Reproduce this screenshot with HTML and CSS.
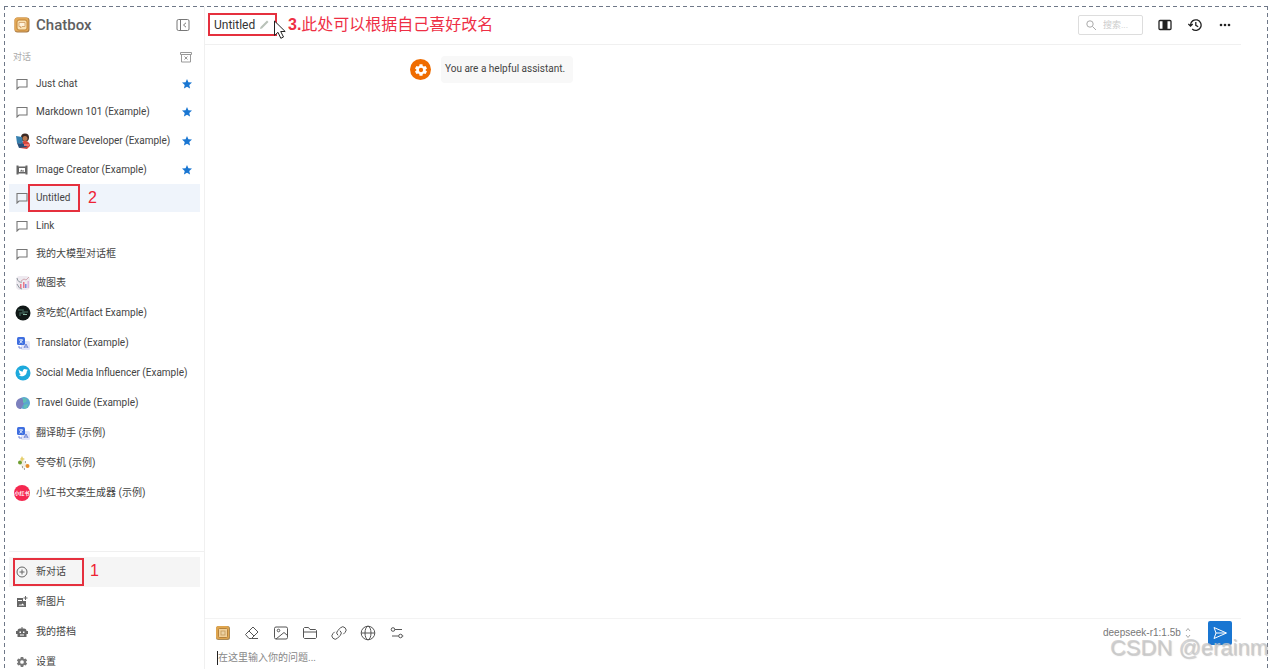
FILE: index.html
```html
<!DOCTYPE html>
<html lang="zh-CN">
<head>
<meta charset="utf-8">
<title>Chatbox</title>
<meta name="viewport" content="width=device-width, initial-scale=1">
<link rel="stylesheet" href="styles.css">
</head>
<body>
<svg class="sprite" aria-hidden="true">
  <symbol id="bubble" viewBox="0 0 12 12"><path fill="none" stroke="currentColor" stroke-width="1.100" d="M1 11V1.500h10v7.500H3z"/></symbol>
  <symbol id="star" viewBox="0 0 24 24"><path fill="currentColor" d="M12 17.270 18.180 21l-1.640-7.030L22 9.240l-7.190-.610L12 2 9.190 8.630 2 9.240l5.460 4.730L5.820 21z"/></symbol>
  <symbol id="gear" viewBox="0 0 24 24"><path fill="currentColor" fill-rule="evenodd" d="M9.500 2h5l.5 3 2 1.100 2.800-1.100 2.500 4.300-2.300 1.900v1.600l2.300 1.900-2.500 4.300-2.800-1.100-2 1.100-.5 3h-5L9 19l-2-1.100L4.200 19l-2.500-4.300L4 12.800v-1.600L1.700 9.300 4.200 5 7 6.100 9 5zM12 8.300a3.700 3.700 0 1 0 0 7.400 3.700 3.700 0 0 0 0-7.400z"/></symbol>
  <symbol id="logo" viewBox="0 0 16 16"><rect x=".5" y=".5" width="15" height="15" rx="3" fill="#a97c48"/><rect x=".5" y=".5" width="14" height="14" rx="3" fill="#e3a856"/><rect x="3" y="3" width="10" height="10" rx="2" fill="#fbe3b4" stroke="#c08438"/><path d="M5 5.500h6v4H8L6.500 11V9.500H5z" fill="#fff3dc" stroke="#cf9a62" stroke-width=".8"/></symbol>
  <symbol id="block" viewBox="0 0 16 16"><rect x="1" y="1" width="14" height="14" rx="2.500" fill="#a98a58"/><rect x="1" y="1" width="13" height="13" rx="2.500" fill="#dfa54e"/><rect x="3.500" y="3.500" width="9" height="9" rx="1" fill="#f0d09a" stroke="#b5823c"/><rect x="6" y="6" width="4" height="4" fill="#ecd2a4" stroke="#c39a5c" stroke-width=".8"/></symbol>
  <symbol id="translate" viewBox="0 0 16 16"><rect x="6" y="6" width="9" height="9" rx="1.500" fill="#e3e5f8"/><rect x="2" y="2" width="8" height="8" rx="1.500" fill="#3f6fe0"/><path d="M4 5h4M6 4v1M4.500 8.500 7.500 5M5 6l2.500 2" stroke="#fff" stroke-width=".8" fill="none"/><path d="M4 11v2h3M9 13l2-4 2 4M9.600 12h2.800" stroke="#6e83d6" fill="none"/></symbol>
</svg>

<div class="app">
  <aside class="sidebar">
    <header class="brand">
      <svg class="logo"><use href="#logo"/></svg>
      <h1>Chatbox</h1>
      <button class="plain" aria-label="收起侧栏"><svg class="i14" viewBox="0 0 14 14" fill="none" stroke="#777"><rect x="1" y="1.500" width="12" height="11" rx="1.500"/><path d="M4.500 1.500v11M10 4.800 7.500 7 10 9.200"/></svg></button>
    </header>
    <div class="section">
      <span>对话</span>
      <button class="plain" aria-label="归档"><svg class="i12" viewBox="0 0 12 12" fill="none" stroke="#999"><path d="M.5 1.500h11v2H.5zM1.500 3.500v7.500h9V3.500M4.500 5.500l3 3M7.500 5.500l-3 3"/></svg></button>
    </div>
    <nav class="chats">
      <a class="row" href="#"><span class="ico"><svg class="i12"><use href="#bubble"/></svg></span><span class="label">Just chat</span><svg class="star"><use href="#star"/></svg></a>
      <a class="row" href="#"><span class="ico"><svg class="i12"><use href="#bubble"/></svg></span><span class="label">Markdown 101 (Example)</span><svg class="star"><use href="#star"/></svg></a>
      <a class="row tall" href="#"><span class="ico"><svg class="i16" viewBox="0 0 16 16"><circle cx="10" cy="4.500" r="4" fill="#3c2a25"/><circle cx="10" cy="5.500" r="2.500" fill="#b87850"/><path d="M5 15c0-5 2-7 5-7s5 2 5 5l-3 3z" fill="#d8483c"/><path d="m1 3 6 1 1 7-6-1z" fill="#367fae"/><path d="m2 10 8 1 2 3-8 1z" fill="#284f7a"/><path d="M9 11h5v2H9z" fill="#ef7771"/></svg></span><span class="label">Software Developer (Example)</span><svg class="star"><use href="#star"/></svg></a>
      <a class="row" href="#"><span class="ico"><svg class="i12" viewBox="0 0 12 12"><path fill="#666" fill-rule="evenodd" d="M.5 1.500h2v1h7v-1h2v9h-2v-1h-7v1h-2zM3 4v4h6V4zM4 7.500l1.300-2 1 1.200.9-.8L8.300 7.500z"/></svg></span><span class="label">Image Creator (Example)</span><svg class="star"><use href="#star"/></svg></a>
      <a class="row active" href="#" aria-current="page"><span class="ico"><svg class="i12"><use href="#bubble"/></svg></span><span class="label">Untitled</span><span class="mark mark-chat"></span><span class="step step-chat">2</span></a>
      <a class="row" href="#"><span class="ico"><svg class="i12"><use href="#bubble"/></svg></span><span class="label">Link</span></a>
      <a class="row" href="#"><span class="ico"><svg class="i12"><use href="#bubble"/></svg></span><span class="label">我的大模型对话框</span></a>
      <a class="row tall" href="#"><span class="ico"><svg class="i16" viewBox="0 0 16 16"><rect x="1" y="1" width="14" height="14" rx="4" fill="#eeeaf0"/><path d="M2 3q1 5 5 4M2 9q2 5 5 5" stroke="#8e989e" fill="none"/><path d="M5 13V9h1.500v4zM8 13V7h1.500v6z" fill="#e8798b"/><path d="M10 13V9h1.500v4z" fill="#778bdc"/><path d="m6 6 3-2 2 1 3-3" stroke="#d3a9b2" fill="none"/><path d="M12.500 13V6H14v7z" fill="#e0b3da"/></svg></span><span class="label">做图表</span></a>
      <a class="row tall" href="#"><span class="ico"><svg class="i16" viewBox="0 0 16 16"><circle cx="8" cy="8" r="7.500" fill="#101817"/><path d="M3 5h5v3H5v3M9 10V7h4" stroke="#37564d" stroke-width="1.500" fill="none"/><path d="M8 9.500h4" stroke="#84b5a1"/></svg></span><span class="label">贪吃蛇(Artifact Example)</span></a>
      <a class="row tall" href="#"><span class="ico"><svg class="i16"><use href="#translate"/></svg></span><span class="label">Translator (Example)</span></a>
      <a class="row tall" href="#"><span class="ico"><svg class="i16" viewBox="0 0 16 16"><circle cx="8" cy="8" r="7.500" fill="#1da9dc"/><path fill="#fff" d="M3.800 4.500c1.200 1.400 2.500 2 4.100 2-.4-2.300 2-3.200 3.300-1.900l1.400-.4-.6 1.100.7-.1-.9 1c.1 4-4.200 6.300-8.300 4.300 1.100.1 2-.2 2.700-.8-1-.1-1.500-.6-1.700-1.300h.8c-1-.4-1.400-1.100-1.400-1.900l.7.2c-.9-.7-1.100-1.400-.8-2.200z"/></svg></span><span class="label">Social Media Influencer (Example)</span></a>
      <a class="row tall" href="#"><span class="ico"><svg class="i16" viewBox="0 0 16 16"><circle cx="9" cy="8" r="6" fill="#5aa7cf"/><path d="M1 9c0-4 3-6 6-6l2 5-3 6c-3 0-5-2-5-5z" fill="#7c80bd"/><path d="m8 3 4 1-1 3-3 1zM9 10l4-1-1 4-3 1z" fill="#61bfb4"/></svg></span><span class="label">Travel Guide (Example)</span></a>
      <a class="row tall" href="#"><span class="ico"><svg class="i16"><use href="#translate"/></svg></span><span class="label">翻译助手 (示例)</span></a>
      <a class="row tall" href="#"><span class="ico"><svg class="i16" viewBox="0 0 16 16"><path d="m4 7 3-4 5 6-4 6z" fill="#f0eee5"/><circle cx="5" cy="7.500" r="2" fill="#6f9e31"/><circle cx="12.500" cy="11" r="2" fill="#e58b2a"/><path d="m7 1 1 2 2 1-2 1-1 2-1-2-1-1 1-1z" fill="#e6cf6c"/><path d="M7 12h1M9 14h1M10 7h1" stroke="#555"/></svg></span><span class="label">夸夸机 (示例)</span></a>
      <a class="row tall" href="#"><span class="ico"><span class="redbook">小红书</span></span><span class="label">小红书文案生成器 (示例)</span></a>
    </nav>
    <nav class="actions">
      <button class="row tall hover"><span class="ico"><svg class="i12" viewBox="0 0 12 12" fill="none" stroke="#666"><circle cx="6" cy="6" r="5"/><path d="M6 3.500v5M3.500 6h5"/></svg></span><span class="label">新对话</span><span class="mark mark-new"></span><span class="step step-new">1</span></button>
      <button class="row tall"><span class="ico"><svg class="i12" viewBox="0 0 12 12"><path fill="#666" fill-rule="evenodd" d="M1 2h6v3h3v6H1zM2.500 9.500h6L6.500 7.500 5 9 4 8.200zM2 4v1h4V4z"/><path d="M9.500 0v4M7.500 2h4" stroke="#666"/></svg></span><span class="label">新图片</span></button>
      <button class="row tall"><span class="ico"><svg class="i12" viewBox="0 0 12 12"><path fill="#666" fill-rule="evenodd" d="M5.500 2.500V1h1v1.500H8A2.500 2.500 0 0 1 10.500 5H12v3h-1.500v3h-9V8H0V5h1.500A2.500 2.500 0 0 1 4 2.500zM3.500 5.500V7H5V5.500zm3.500 0V7h1.500V5.500zM4 8.500v1h4v-1z"/></svg></span><span class="label">我的搭档</span></button>
      <button class="row tall"><span class="ico"><svg class="i12"><use href="#gear"/></svg></span><span class="label">设置</span></button>
    </nav>
  </aside>

  <main class="main">
    <header class="topbar">
      <div class="title">
        <h2>Untitled</h2>
        <button class="plain" aria-label="重命名"><svg class="i12" viewBox="0 0 12 12"><path d="m2 10 .5-2L9 1.500 10.500 3 4 9.500z" fill="#b9c2b9"/></svg></button>
        <svg class="cursor" viewBox="0 0 14 20"><path d="M1.500 1v14.500L5 12.300l2.800 6 2.700-1.300-2.800-5.500h4.500z" fill="#fff" stroke="#222"/></svg>
      </div>
      <p class="note"><b>3.</b>此处可以根据自己喜好改名</p>
      <label class="search"><svg class="i12" viewBox="0 0 12 12" fill="none" stroke="#aaa"><circle cx="5" cy="5" r="3.200"/><path d="M7.500 7.500 11 11"/></svg><input type="text" placeholder="搜索..." aria-label="搜索"></label>
      <div class="tools">
        <button class="plain" aria-label="切换宽度"><svg class="i14" viewBox="0 0 14 14"><rect x="1" y="2.500" width="12" height="9" rx="1" fill="#fff" stroke="#222" stroke-width="1.300"/><path d="M4.500 2h5v10h-5z" fill="#222"/></svg></button>
        <button class="plain" aria-label="历史"><svg class="i14" viewBox="0 0 14 14" fill="none" stroke="#222" stroke-width="1.300"><path d="M2.500 7a5.300 5.300 0 1 1 1.700 4M.3 6l2.200 2 2.200-2M7.800 4v3.300l2.400 1.400"/></svg></button>
        <button class="plain" aria-label="更多"><svg class="i14" viewBox="0 0 14 14" fill="#222"><circle cx="3" cy="7" r="1.300"/><circle cx="7" cy="7" r="1.300"/><circle cx="11" cy="7" r="1.300"/></svg></button>
      </div>
    </header>
    <section class="thread">
      <div class="message">
        <span class="avatar"><svg class="i14"><use href="#gear"/></svg></span>
        <p>You are a helpful assistant.</p>
      </div>
    </section>
    <form class="composer">
      <div class="bar">
        <button type="button" class="plain" aria-label="Chatbox"><svg class="i16"><use href="#block"/></svg></button>
        <button type="button" class="plain" aria-label="清除"><svg class="i16 line" viewBox="0 0 16 16"><path d="M1.500 9.500 9 2l5 5-6.500 6.500H5zM5 6l5 5M7.500 13.500h6.500"/></svg></button>
        <button type="button" class="plain" aria-label="图片"><svg class="i16 line" viewBox="0 0 16 16"><rect x="1.500" y="2" width="13" height="12" rx="1.500"/><circle cx="5.500" cy="5.500" r="1.300"/><path d="m3 14 8-6.500 3.500 3"/></svg></button>
        <button type="button" class="plain" aria-label="文件"><svg class="i16 line" viewBox="0 0 16 16"><path d="M1.500 12.500v-9l1-1h4l1.500 2h5.500l1 1v7l-1 1h-11zM1.500 7h13"/></svg></button>
        <button type="button" class="plain" aria-label="链接"><svg class="i16 line" viewBox="0 0 16 16"><path d="M7 10.300a3.200 3.200 0 0 1-.3-4.700l2.800-2.800a3.200 3.200 0 0 1 4.600 4.600l-1.800 1.800M9 5.700a3.200 3.200 0 0 1 .3 4.700l-2.800 2.800a3.200 3.200 0 0 1-4.600-4.600l1.800-1.800"/></svg></button>
        <button type="button" class="plain" aria-label="联网"><svg class="i16 line" viewBox="0 0 16 16"><circle cx="8" cy="8" r="6.800"/><ellipse cx="8" cy="8" rx="3" ry="6.800"/><path d="M1.200 8h13.600"/></svg></button>
        <button type="button" class="plain" aria-label="设置"><svg class="i16 line" viewBox="0 0 16 16"><circle cx="4" cy="4.500" r="1.800"/><path d="M5.800 4.500H13"/><circle cx="11.500" cy="11" r="1.800"/><path d="M3 11h6.700M13.300 11h1"/></svg></button>
        <span class="model">
          <select aria-label="模型"><option>deepseek-r1:1.5b</option></select>
          <svg class="updown" viewBox="0 0 6 12" fill="none" stroke="#aaa"><path d="m1 4 2-2.500L5 4M1 8l2 2.500L5 8"/></svg>
        </span>
        <button type="submit" class="send" aria-label="发送"><svg class="i16" viewBox="0 0 16 16" fill="none" stroke="#fff"><path d="M2 2.500 14.500 8 2 13.500 4 8zM4 8h10"/></svg></button>
      </div>
      <div class="entry"><span class="caret"></span><textarea rows="1" placeholder="在这里输入你的问题..." aria-label="消息"></textarea></div>
    </form>
  </main>
  <div class="watermark">CSDN @erainm</div>
</div>
</body>
</html>
```
FILE: styles.css
```css
* { box-sizing: border-box; }
html, body { height: 100%; overflow: hidden; }
body { margin: 0; background: #fff; color: #444; font: 10px/16px Roboto, "Noto Sans CJK SC", sans-serif; }
h1, h2, p { margin: 0; }
button, input, select, textarea { font: inherit; color: inherit; border: 0; background: none; padding: 0; margin: 0; outline: 0; }
a { color: inherit; text-decoration: none; }
svg { display: block; flex: none; }
.sprite { position: absolute; width: 0; height: 0; }
.plain { display: flex; }
.i12 { width: 12px; height: 12px; }
.i14 { width: 14px; height: 14px; }
.i16 { width: 16px; height: 16px; }
.line { fill: none; stroke: #555; }

/* Dashed frame on three sides; the content runs past the bottom edge of the window. */
.app {
  position: relative;
  display: flex;
  height: calc(100% + 2px);
  margin: 6px 5px 0 4px;
  padding: 1px 1px 0;
  background:
    repeating-linear-gradient(90deg, #6f7888 0 4px, transparent 4px 7px) top / 100% 1px no-repeat,
    repeating-linear-gradient(#6f7888 0 4px, transparent 4px 7px) left / 1px 100% no-repeat,
    repeating-linear-gradient(#6f7888 0 4px, transparent 4px 7px) right / 1px 100% no-repeat;
}

.sidebar { flex: none; display: flex; flex-direction: column; width: 200px; padding-left: 4px; border-right: 1px solid #f0f0f0; }
.brand { display: flex; align-items: center; gap: 6px; height: 36px; padding: 0 14px 0 5px; }
.brand h1 { flex: 1; font-size: 15px; font-weight: 500; color: #606060; }
.logo { width: 16px; height: 16px; }
.section { display: flex; align-items: center; justify-content: space-between; height: 27px; padding: 0 12px 0 4px; font-size: 9px; color: #aaa; }
.chats { flex: 1; min-height: 0; padding-right: 4px; }
.row { position: relative; display: flex; align-items: center; width: 100%; height: 28px; padding: 0 7px 0 5px; text-align: left; white-space: nowrap; }
.row.tall { height: 30px; }
.row.active { background: #eff4fb; }
.row.hover { background: #f5f5f5; }
.ico { flex: none; display: flex; align-items: center; width: 22px; color: #777; }
.ico .i12 { margin-left: 2px; }
.ico .i16 { margin-left: 1px; }
.label { flex: 1; }
.star { width: 12px; height: 12px; color: #1976d2; }
.redbook { width: 16px; height: 16px; border-radius: 50%; background: #f52850; color: #fff; font-size: 5px; line-height: 16px; text-align: center; font-weight: 700; }
.actions { padding: 5px 4px 0 0; border-top: 1px solid #f0f0f0; }

.mark { position: absolute; border: 2px solid #e5303e; }
.mark-chat { left: 19px; top: 0; width: 52px; height: 28px; }
.mark-new { left: 4px; top: 1px; width: 71px; height: 28px; }
.step { position: absolute; top: 0; font: 16px/28px "Liberation Sans", sans-serif; color: #ee2233; }
.step-chat { left: 79px; }
.step-new { left: 81px; }

.main { flex: 1; min-width: 0; display: flex; flex-direction: column; padding-right: 26px; }
.topbar { display: flex; align-items: center; height: 38px; padding: 0 9px 2px 3px; border-bottom: 1px solid #f0f0f0; }
.title { position: relative; display: flex; align-items: center; gap: 3px; width: 69px; height: 23px; padding-left: 4px; border: 2px solid #e5303e; }
.title h2 { font-size: 12px; font-weight: 400; color: #333; }
.cursor { position: absolute; left: 63px; top: 5px; width: 14px; height: 20px; }
.note { flex: 1; padding-left: 11px; font: 16px/20px "Liberation Sans", "Noto Sans CJK SC", sans-serif; color: #ee2f45; white-space: nowrap; }
.search { display: flex; align-items: center; gap: 6px; width: 65px; height: 20px; padding: 0 6px; border: 1px solid #ddd; border-radius: 2px; }
.search input { flex: 1; min-width: 0; font-size: 9px; }
.search input::placeholder { color: #ccc; }
.tools { display: flex; gap: 16px; margin-left: 15px; }

.thread { flex: 1; padding: 11px 0 0 205px; }
.message { display: flex; align-items: center; gap: 10px; }
.avatar { display: grid; place-items: center; width: 21px; height: 21px; border-radius: 50%; background: #ef6c00; color: #fff; }
.message p { padding: 5px 8px 6px 4px; border-radius: 4px; background: #f8f8f8; }

.composer { height: 59px; padding: 2px 9px 0 10px; border-top: 1px solid #f3f3f3; }
.bar { display: flex; align-items: center; gap: 13px; height: 24px; }
.model { display: flex; align-items: center; gap: 4px; margin: 0 4px 0 auto; color: #777; }
.model select { appearance: none; font: 10px/16px "Liberation Sans", sans-serif; }
.updown { width: 6px; height: 12px; }
.send { display: grid; place-items: center; width: 24px; height: 24px; border-radius: 2px; background: #1976d2; }
.entry { display: flex; align-items: center; padding: 5px 0 0 2px; }
.caret { width: 1px; height: 14px; background: #222; }
.entry textarea { flex: 1; height: 16px; resize: none; overflow: hidden; }
.entry textarea::placeholder { color: #888; }

.watermark { position: absolute; right: 0; top: 630px; font: 22px/24px "Liberation Sans", sans-serif; color: #c8c8c8cc; text-shadow: 1px 1px 1px #9998; pointer-events: none; }
```
